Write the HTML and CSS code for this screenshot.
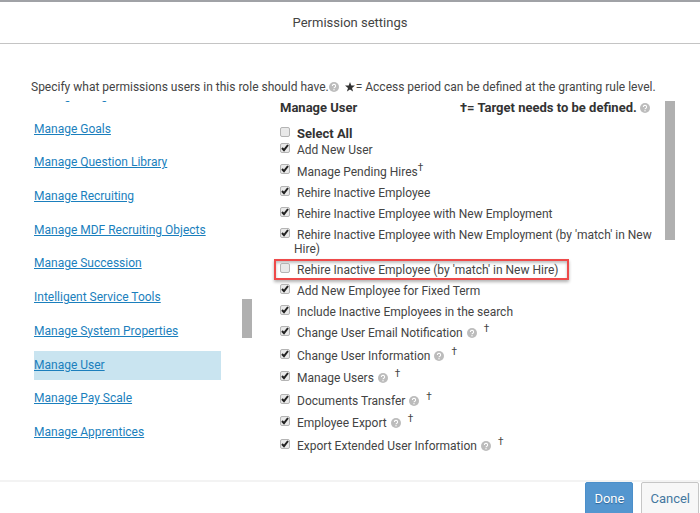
FILE: index.html
```html
<!DOCTYPE html>
<html lang="en">
<head>
  <meta charset="UTF-8">
  <title>Permission settings</title>
  <meta name="viewport" content="width=device-width, initial-scale=1.0">
  <link rel="stylesheet" href="styles.css">
</head>
<body>

  <svg class="defs" aria-hidden="true">
    <symbol id="help" viewBox="0 0 10 10">
      <circle cx="5" cy="5" r="5" fill="#bcbcbc"/>
      <path d="M3.4 3.9a1.6 1.5 0 1 1 2.4 1.3q-.8.4-.8 1" fill="none" stroke="#fff" stroke-width="1.1"/>
      <circle cx="5" cy="7.8" r=".7" fill="#fff"/>
    </symbol>
  </svg>

  <header class="dialog-header">
    <h1>Permission settings</h1>
  </header>

  <main>
    <p class="intro">Specify what permissions users in this role should have.<svg class="help"><use href="#help"/></svg> <svg class="star" viewBox="0 0 10 10"><path d="M5 0l1.3 3.6H10L7 5.9 8.1 9.6 5 7.4 1.9 9.6 3 5.9 0 3.6h3.7z"/></svg>= Access period can be defined at the granting rule level.</p>

    <div class="panels">
      <nav class="categories">
        <ul>
          <li><a href="#">Manage Badges</a></li>
          <li><a href="#">Manage Goals</a></li>
          <li><a href="#">Manage Question Library</a></li>
          <li><a href="#">Manage Recruiting</a></li>
          <li><a href="#">Manage MDF Recruiting Objects</a></li>
          <li><a href="#">Manage Succession</a></li>
          <li><a href="#">Intelligent Service Tools</a></li>
          <li><a href="#">Manage System Properties</a></li>
          <li class="selected"><a href="#">Manage User</a></li>
          <li><a href="#">Manage Pay Scale</a></li>
          <li><a href="#">Manage Apprentices</a></li>
        </ul>
      </nav>
      <div class="scrollbar middle"><div class="thumb"></div></div>

      <section class="permissions">
        <div class="permissions-head">
          <h2>Manage User</h2>
          <strong>†= Target needs to be defined. <svg class="help"><use href="#help"/></svg></strong>
        </div>

        <div class="perm all"><input type="checkbox" id="p0"><label for="p0">Select All</label></div>
        <div class="perm first"><input type="checkbox" id="p1" checked><label for="p1">Add New User</label></div>
        <div class="perm target"><input type="checkbox" id="p2" checked><label for="p2">Manage Pending Hires<sup>†</sup></label></div>
        <div class="perm"><input type="checkbox" id="p3" checked><label for="p3">Rehire Inactive Employee</label></div>
        <div class="perm"><input type="checkbox" id="p4" checked><label for="p4">Rehire Inactive Employee with New Employment</label></div>
        <div class="perm long"><input type="checkbox" id="p5" checked><label for="p5">Rehire Inactive Employee with New Employment (by 'match' in New Hire)</label></div>
        <div class="perm marked"><input type="checkbox" id="p6"><label for="p6">Rehire Inactive Employee (by 'match' in New Hire)</label></div>
        <div class="perm"><input type="checkbox" id="p7" checked><label for="p7">Add New Employee for Fixed Term</label></div>
        <div class="perm"><input type="checkbox" id="p8" checked><label for="p8">Include Inactive Employees in the search</label></div>

        <div class="with-help">
          <div class="perm"><input type="checkbox" id="p9" checked><label for="p9">Change User Email Notification</label><svg class="help"><use href="#help"/></svg><sup>†</sup></div>
          <div class="perm"><input type="checkbox" id="p10" checked><label for="p10">Change User Information</label><svg class="help"><use href="#help"/></svg><sup>†</sup></div>
          <div class="perm"><input type="checkbox" id="p11" checked><label for="p11">Manage Users</label><svg class="help"><use href="#help"/></svg><sup>†</sup></div>
          <div class="perm"><input type="checkbox" id="p12" checked><label for="p12">Documents Transfer</label><svg class="help"><use href="#help"/></svg><sup>†</sup></div>
          <div class="perm"><input type="checkbox" id="p13" checked><label for="p13">Employee Export</label><svg class="help"><use href="#help"/></svg><sup>†</sup></div>
          <div class="perm"><input type="checkbox" id="p14" checked><label for="p14">Export Extended User Information</label><svg class="help"><use href="#help"/></svg><sup>†</sup></div>
        </div>
      </section>
      <div class="scrollbar"><div class="thumb tall"></div></div>
    </div>
  </main>

  <footer>
    <button class="done">Done</button>
    <button class="cancel">Cancel</button>
  </footer>

</body>
</html>
```

FILE: styles.css
```css
* {
  box-sizing: border-box;
}

body {
  margin: 0;
  height: 100vh;
  overflow: hidden;
  display: flex;
  flex-direction: column;
  font-family: Roboto, "Liberation Sans", sans-serif;
  font-size: 12px;
  color: #444;
  background: #fff;
}

.defs {
  position: absolute;
  width: 0;
  height: 0;
}

.dialog-header {
  border-top: 2px solid #a0a2a6;
  border-bottom: 1px solid #c4c4c4;
}

h1 {
  margin: 0;
  font-size: 13px;
  font-weight: 400;
  line-height: 41px;
  text-align: center;
}

main {
  flex: 1;
  min-height: 0;
  display: flex;
  flex-direction: column;
  padding: 35px 25px 30px 31px;
}

.intro {
  margin: 0;
  line-height: 16px;
  white-space: nowrap;
}

.help {
  width: 10px;
  height: 10px;
  vertical-align: -1px;
}

.star {
  width: 10px;
  height: 10px;
  margin: 0 1px 0 3px;
  vertical-align: -1px;
  fill: #333;
}

.panels {
  flex: 1;
  min-height: 0;
  display: flex;
  margin-top: 6px;
}

.categories {
  flex: 1;
  display: flex;
  flex-direction: column;
  justify-content: flex-end;
  overflow: hidden;
  padding: 0 21px 3px 3px;
}

.categories ul {
  flex: none;
  height: 366px;
  display: flex;
  flex-direction: column;
  justify-content: space-between;
  margin: 0;
  padding: 0;
  list-style: none;
}

.categories li {
  line-height: 29px;
}

.categories a {
  color: #1b7fbd;
  text-decoration: underline;
}

.categories .selected {
  background: #c9e4f0;
}

.scrollbar {
  flex: none;
  width: 10px;
}

.scrollbar.middle {
  padding-top: 198px;
}

.thumb {
  height: 39px;
  background: #b0b0b0;
}

.thumb.tall {
  height: 139px;
}

.permissions {
  flex: none;
  width: 60%;
  min-width: 413px;
  padding-left: 28px;
}

.permissions-head {
  display: flex;
  justify-content: space-between;
  padding-right: 15px;
  font-size: 13px;
  line-height: 14px;
  color: #333;
}

h2 {
  margin: 0;
  font-size: 13px;
}

.perm {
  display: flex;
  align-items: center;
  min-height: 21px;
  line-height: 14px;
}

.perm input {
  appearance: none;
  flex: none;
  width: 10px;
  height: 10px;
  margin: 0 7px 4px 0;
  border: 1px solid #b4b4b4;
  border-radius: 2px;
  background: #e9e9e9;
}

.perm input:checked {
  background: #e9e9e9 url("data:image/svg+xml,%3Csvg xmlns='http://www.w3.org/2000/svg' viewBox='0 0 8 8'%3E%3Cpath d='M1 4l2 2.2L7 1' fill='none' stroke='%23222' stroke-width='2'/%3E%3C/svg%3E");
}

.perm sup {
  font-size: 10px;
  line-height: 10px;
  vertical-align: 5px;
}

.perm.all {
  min-height: 16px;
  margin-top: 11px;
  font-size: 13px;
  font-weight: 700;
  color: #333;
}

.perm.first {
  min-height: 16px;
}

.perm.target {
  min-height: 24px;
  padding-top: 2px;
}

/* wrapped text hangs a little left of the first line */
.perm.long {
  align-items: flex-start;
  min-height: 35px;
  padding-top: 4px;
}

.perm.long label {
  text-indent: 3px;
}

.perm.long input {
  margin-right: 4px;
}

.perm.marked {
  width: fit-content;
  min-height: 21px;
  margin-left: -6px;
  padding: 0 9px 0 4px;
  border: 2px solid #ee4a4a;
  box-shadow: 0 2px 3px rgba(0, 0, 0, 0.3), inset 0 2px 3px rgba(0, 0, 0, 0.25);
}

.with-help {
  height: 135px;
  display: grid;
  grid-auto-rows: 1fr;
}

.with-help .help {
  margin-left: 4px;
}

.with-help sup {
  margin: 0 0 8px 7px;
}

footer {
  display: flex;
  justify-content: flex-end;
  gap: 8px;
  height: 33px;
  padding: 0 1px 0 0;
  border-top: 2px solid #f3f3f3;
}

button {
  height: 36px;
  padding: 0 8px 3px;
  border-radius: 2px;
  font-family: inherit;
  font-size: 13px;
}

.done {
  border: 1px solid #4b8fca;
  background: #5496cf;
  color: #fff;
  text-shadow: 0 1px 1px #2c6496;
}

.cancel {
  border: 1px solid #c6c6c6;
  background: #f7f7f7;
  color: #44779f;
}
```
